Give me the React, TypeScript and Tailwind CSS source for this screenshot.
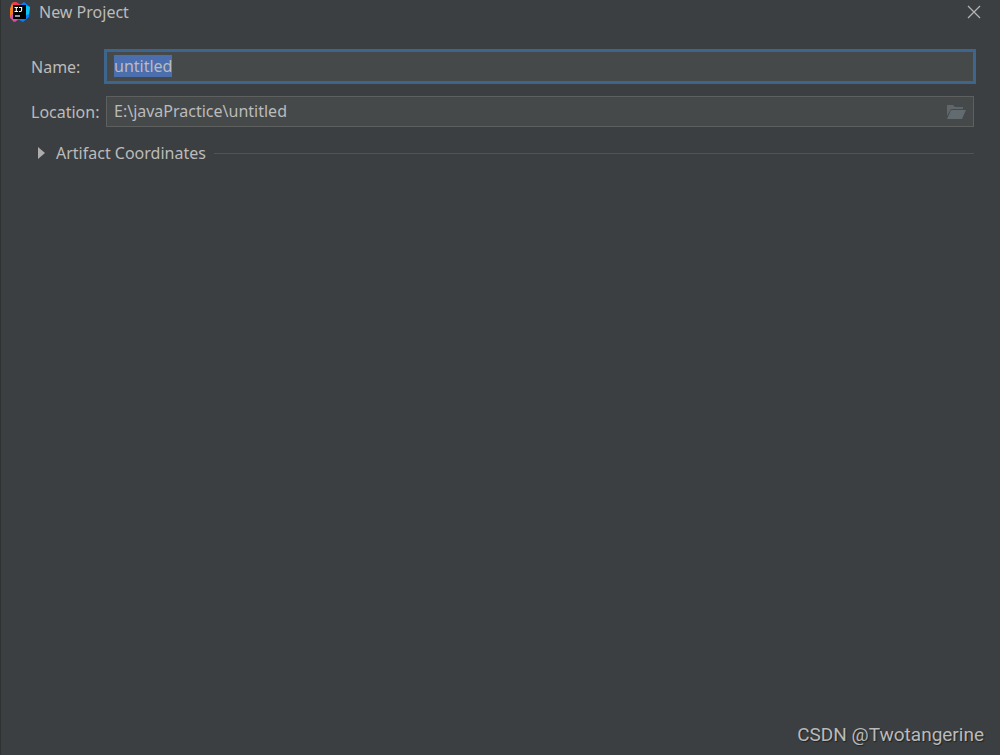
import React, { useEffect, useRef, useState } from 'react';

const IdeaLogo: React.FC = () => (
  <svg className="h-5 w-5 shrink-0" viewBox="0 0 20 20" aria-hidden="true">
    <path d="M0 7 2 1 6 0 10 6 7 13 1 14Z" fill="#fc801d" />
    <path d="M2 1 6 0 11 3 9 8 4 7Z" fill="#fe315d" />
    <path d="M0 9 4 7 5 17 4 20 0 15Z" fill="#f97a12" />
    <path d="M1 13 4 11 9 17 5 20 0 16Z" fill="#d34fb4" />
    <path d="M10 3 14 0 20 5 19 15 13 20 7 17Z" fill="#087cfa" />
    <path d="M15 3 20 5 19 12 15 14Z" fill="#07c3f2" />
    <path d="M3 3H16V17H3Z" fill="#000" />
    <path d="M4.5 5.5h3.5M6.3 5.5v4M4.5 9.5h3.5M9 5.5h3.2M11.6 5.5v2.8q0 1.2-1.2 1.2H8.9" stroke="#fff" strokeWidth="1.1" fill="none" />
    <path d="M5 14h5" stroke="#fff" strokeWidth="1.2" />
  </svg>
);

const FolderIcon: React.FC = () => (
  <svg className="h-4 w-5" viewBox="0 0 20 16" aria-hidden="true">
    <path d="M1 1h6l2 2h8v2H5l-4 7z" fill="#5f676b" />
    <path d="M5 6h15l-4 9H1z" fill="#616b70" />
  </svg>
);

export default function App() {
  const [name, setName] = useState('untitled');
  const [location, setLocation] = useState('E:\\javaPractice\\untitled');
  const [expanded, setExpanded] = useState(false);
  const nameRef = useRef<HTMLInputElement>(null);

  useEffect(() => {
    nameRef.current?.focus();
    nameRef.current?.select();
  }, []);

  return (
    <div className="flex min-h-screen flex-col border-l border-[#2f3233] bg-[#3c3f41] font-['Noto_Sans',sans-serif] text-base leading-5 text-[#bbbbbb]">
      <header className="flex h-6 items-center justify-between pr-[18px] pl-[9px]">
        <div className="flex items-center gap-[9px]">
          <IdeaLogo />
          <h1>New Project</h1>
        </div>
        <button type="button" aria-label="Close">
          <svg className="h-4 w-4" viewBox="0 0 16 16" aria-hidden="true">
            <path d="M2 2 14 14M14 2 2 14" stroke="#b4b4b4" strokeWidth="1.2" />
          </svg>
        </button>
      </header>

      <main className="flex-1 pt-[27px] pr-[26px] pl-[30px]">
        <div className="grid grid-cols-[75px_1fr] items-center gap-y-[14px]">
          <label htmlFor="name">Name:</label>
          <input
            id="name"
            ref={nameRef}
            type="text"
            value={name}
            onChange={(e) => setName(e.target.value)}
            className="h-[31px] w-full border border-[#3e658b] bg-[#45494a] px-[7px] pb-0.5 ring-2 ring-[#3e658b] outline-none selection:bg-[#4b6eaf] selection:text-[#bbbbbb]"
          />
          <label htmlFor="location">Location:</label>
          <div className="flex h-[31px] items-center border border-[#5e6060] bg-[#45494a] px-[7px]">
            <input
              id="location"
              type="text"
              value={location}
              onChange={(e) => setLocation(e.target.value)}
              className="min-w-0 flex-1 bg-transparent pb-0.5 outline-none"
            />
            <button type="button" aria-label="Browse">
              <FolderIcon />
            </button>
          </div>
        </div>

        <button
          type="button"
          aria-expanded={expanded}
          onClick={() => setExpanded(!expanded)}
          className="mt-4 flex w-full items-center gap-2 pl-1.5"
        >
          <svg className={expanded ? 'h-3 w-[11px] rotate-90' : 'h-3 w-[11px]'} viewBox="0 0 11 12" aria-hidden="true">
            <path d="M1 0 8 6 1 12Z" fill="#adadad" />
          </svg>
          <span>Artifact Coordinates</span>
          <span className="h-px flex-1 bg-[#515354]" />
        </button>
      </main>

      <footer className="flex justify-end pr-4 pb-2 font-[Roboto,sans-serif] text-[19px] leading-6 text-[#b9babb] [text-shadow:1px_1px_1px_#222]">
        CSDN @Twotangerine
      </footer>
    </div>
  );
}
